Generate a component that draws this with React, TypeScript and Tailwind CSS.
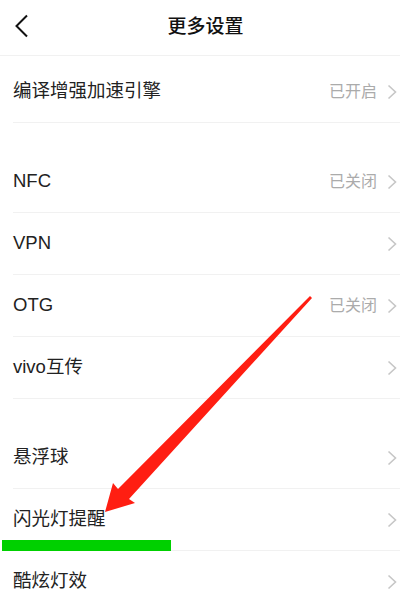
import React from "react";

type Row = { label: string; status?: string };

const groups: { rows: Row[]; gap: string }[] = [
  { rows: [{ label: "编译增强加速引擎", status: "已开启" }], gap: "mt-[5px]" },
  {
    rows: [
      { label: "NFC", status: "已关闭" },
      { label: "VPN" },
      { label: "OTG", status: "已关闭" },
      { label: "vivo互传" },
    ],
    gap: "mt-[28px]",
  },
  {
    rows: [{ label: "悬浮球" }, { label: "闪光灯提醒" }, { label: "酷炫灯效" }],
    gap: "mt-[28px]",
  },
];

const Chevron = () => (
  <svg width="10" height="16" viewBox="0 0 10 16" fill="none">
    <polyline points="1.5,1.5 8.5,8 1.5,14.5" stroke="#c6c6c6" strokeWidth="1.6" strokeLinejoin="miter" />
  </svg>
);

const SettingRow = ({ row }: { row: Row }) => (
  <div className="ml-[13px] h-[62px] border-b border-[#f1f1f1] flex items-center pr-[3px]">
    <span className="flex-1 text-[18.5px] text-[#222222] leading-none">{row.label}</span>
    {row.status && <span className="text-[16px] text-[#ababab] mr-[10px] leading-none">{row.status}</span>}
    <Chevron />
  </div>
);

export default function App() {
  return (
    <div
      className="relative w-[400px] h-[601px] overflow-hidden bg-white"
      style={{ fontFamily: '"Liberation Sans", "Noto Sans CJK SC", sans-serif' }}
    >
      <div className="h-[56px] border-b border-[#f1f1f1] flex items-center justify-center relative">
        <svg className="absolute left-[14px] top-[14px]" width="16" height="24" viewBox="0 0 16 24" fill="none">
          <polyline points="13,1.5 2.5,12 13,22.5" stroke="#111111" strokeWidth="2" />
        </svg>
        <span className="ml-[11px] text-[19px] font-medium text-[#111111]">更多设置</span>
      </div>

      {groups.map((g, i) => (
        <div key={i} className={g.gap}>
          {g.rows.map((r) => (
            <SettingRow key={r.label} row={r} />
          ))}
        </div>
      ))}

      {/* annotation overlay */}
      <div className="absolute left-[2px] top-[540px] w-[169px] h-[11px] bg-[#00d000]" />
      <svg className="absolute left-0 top-0" width="400" height="601" viewBox="0 0 400 601">
        <polygon
          points="310,296 312,298 129,499 135,503 105,512 113,483 118,489"
          fill="#ff1e12"
        />
      </svg>
    </div>
  );
}
